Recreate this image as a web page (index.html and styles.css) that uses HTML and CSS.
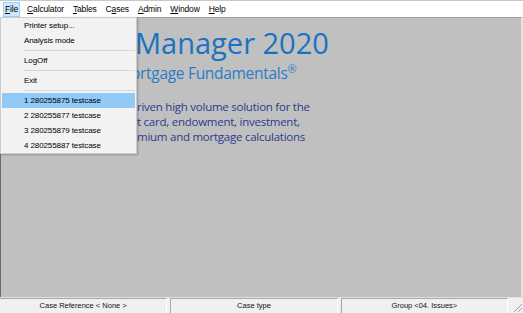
FILE: index.html
```html
<!DOCTYPE html>
<html lang="en">
<head>
  <meta charset="UTF-8">
  <title>Manager 2020</title>
  <link rel="stylesheet" href="styles.css">
</head>
<body>

  <div class="menubar">
    <span class="menu open"><u>F</u>ile</span>
    <span class="menu"><u>C</u>alculator</span>
    <span class="menu"><u>T</u>ables</span>
    <span class="menu">C<u>a</u>ses</span>
    <span class="menu"><u>A</u>dmin</span>
    <span class="menu"><u>W</u>indow</span>
    <span class="menu"><u>H</u>elp</span>
  </div>

  <main class="client">
    <div class="splash">
      <div class="title">Manager 2020</div>
      <div class="subtitle">ortgage Fundamentals<sup>®</sup></div>
      <div class="blurb">
        <div>riven high volume solution for the</div>
        <div>t card, endowment, investment,</div>
        <div>mium and mortgage calculations</div>
      </div>
    </div>
  </main>

  <div class="statusbar">
    <div class="pane">Case Reference &lt; None &gt;</div>
    <div class="pane">Case type</div>
    <div class="pane">Group &lt;04. Issues&gt;</div>
    <div class="grip">
      <svg width="12" height="12" viewBox="0 0 12 12">
        <path d="M11 3 L3 11 M11 7 L7 11" stroke="#a0a0a0" stroke-width="1"/>
      </svg>
    </div>
  </div>

  <div class="dropdown">
    <div class="item">Printer setup...</div>
    <div class="item">Analysis mode</div>
    <div class="sep"></div>
    <div class="item">LogOff</div>
    <div class="sep"></div>
    <div class="item">Exit</div>
    <div class="sep"></div>
    <div class="item active">1 280255875 testcase</div>
    <div class="item">2 280255877 testcase</div>
    <div class="item">3 280255879 testcase</div>
    <div class="item">4 280255887 testcase</div>
  </div>

</body>
</html>
```

FILE: styles.css
```css
:root {
  --mdi: #c0c0c0;
  --menu-bg: #f2f2f2;
  --hot: #cce8ff;
  --hot-border: #99d1ff;
  --pick: #91c9f7;
  --blue: #1a72c2;
  --navy: #2b3b8c;
}

html, body {
  margin: 0;
  height: 313px;
  overflow: hidden;
}

body {
  position: relative;
  display: flex;
  flex-direction: column;
  font-family: 'Liberation Sans', Arial, sans-serif;
  background: #fff;
  color: #000;
}

.menubar {
  display: flex;
  align-items: center;
  height: 16px;
  border-top: 1px solid #c8c8c8;
  padding-left: 3px;
  font-size: 8.5px;
  letter-spacing: -0.15px;
  background: #fff;
}

.menu {
  padding: 0 1px;
  margin-right: 5px;
  line-height: 13px;
  border: 1px solid transparent;
  white-space: nowrap;
}

.menu.open {
  background: var(--hot);
  border-color: var(--hot-border);
}

.client {
  flex: 1;
  background: var(--mdi);
  border-top: 1px solid #a0a0a0;
  border-left: 1px solid #6b6b6b;
  border-right: 2px solid #e4e4e4;
}

.splash {
  padding: 8px 0 0 134px;
  font-family: 'Open Sans', 'Noto Sans', sans-serif;
  white-space: nowrap;
}

.title {
  font-size: 29px;
  line-height: 34px;
  color: var(--blue);
}

.subtitle {
  margin-top: 2px;
  font-size: 15.5px;
  line-height: 22px;
  letter-spacing: -0.3px;
  color: #2a7cc6;
  text-indent: -4px;
}

.subtitle sup {
  font-size: 11px;
  vertical-align: 6px;
  line-height: 0;
}

.blurb {
  margin-top: 15px;
  padding-left: 2px;
  font-size: 11.5px;
  line-height: 15px;
  letter-spacing: -0.25px;
  color: var(--navy);
}

.statusbar {
  display: flex;
  height: 15px;
  border-top: 1px solid #e0e0e0;
  background: #f0f0f0;
  font-size: 7.5px;
}

.pane {
  width: 166px;
  margin-right: 3px;
  text-align: center;
  line-height: 14px;
  white-space: nowrap;
  border-top: 1px solid #a8a8a8;
  border-left: 1px solid #a8a8a8;
  border-right: 1px solid #fff;
  color: #111;
}

.pane:first-child {
  border-left: none;
  width: 167px;
}

.grip {
  flex: 1;
  display: flex;
  align-items: flex-end;
  justify-content: flex-end;
}

.dropdown {
  position: absolute;
  left: 0;
  top: 17px;
  width: 134px;
  padding: 0 0 0 1px;
  background: var(--menu-bg);
  border: 1px solid #cccccc;
  box-shadow: 1px 1px 2px rgba(0,0,0,0.25);
  font-size: 8px;
  letter-spacing: -0.1px;
}

.item {
  height: 15px;
  line-height: 15px;
  padding-left: 22px;
  margin-right: 1px;
  white-space: nowrap;
}

.item.active {
  background: var(--pick);
}

.sep {
  height: 1px;
  margin: 2px 1px 2px 22px;
  background: #d7d7d7;
}
```
